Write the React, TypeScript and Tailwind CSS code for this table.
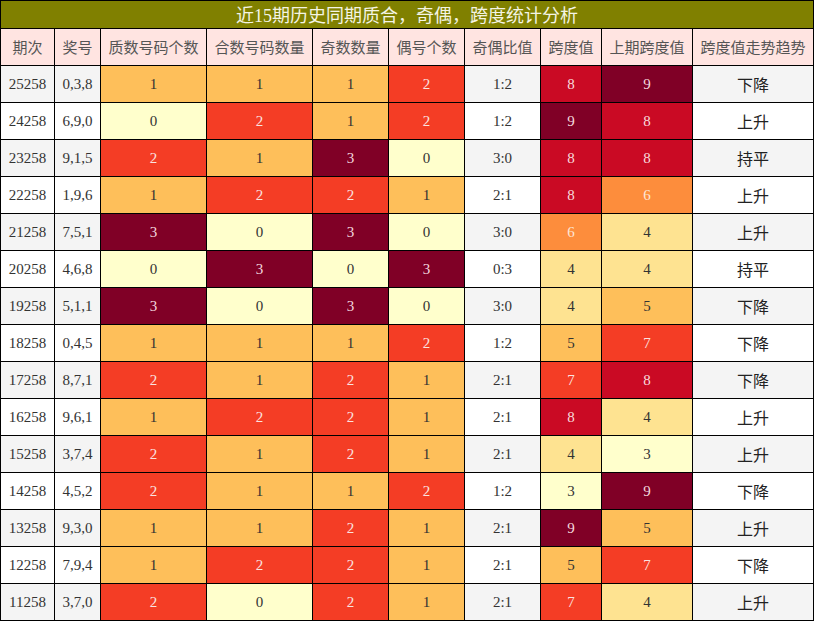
import React from "react";

interface Row {
  issue: string;
  nums: string;
  prime: number;
  composite: number;
  odd: number;
  even: number;
  ratio: string;
  span: number;
  prevSpan: number;
  trend: string;
}

const rows: Row[] = [
  { issue: "25258", nums: "0,3,8", prime: 1, composite: 1, odd: 1, even: 2, ratio: "1:2", span: 8, prevSpan: 9, trend: "下降" },
  { issue: "24258", nums: "6,9,0", prime: 0, composite: 2, odd: 1, even: 2, ratio: "1:2", span: 9, prevSpan: 8, trend: "上升" },
  { issue: "23258", nums: "9,1,5", prime: 2, composite: 1, odd: 3, even: 0, ratio: "3:0", span: 8, prevSpan: 8, trend: "持平" },
  { issue: "22258", nums: "1,9,6", prime: 1, composite: 2, odd: 2, even: 1, ratio: "2:1", span: 8, prevSpan: 6, trend: "上升" },
  { issue: "21258", nums: "7,5,1", prime: 3, composite: 0, odd: 3, even: 0, ratio: "3:0", span: 6, prevSpan: 4, trend: "上升" },
  { issue: "20258", nums: "4,6,8", prime: 0, composite: 3, odd: 0, even: 3, ratio: "0:3", span: 4, prevSpan: 4, trend: "持平" },
  { issue: "19258", nums: "5,1,1", prime: 3, composite: 0, odd: 3, even: 0, ratio: "3:0", span: 4, prevSpan: 5, trend: "下降" },
  { issue: "18258", nums: "0,4,5", prime: 1, composite: 1, odd: 1, even: 2, ratio: "1:2", span: 5, prevSpan: 7, trend: "下降" },
  { issue: "17258", nums: "8,7,1", prime: 2, composite: 1, odd: 2, even: 1, ratio: "2:1", span: 7, prevSpan: 8, trend: "下降" },
  { issue: "16258", nums: "9,6,1", prime: 1, composite: 2, odd: 2, even: 1, ratio: "2:1", span: 8, prevSpan: 4, trend: "上升" },
  { issue: "15258", nums: "3,7,4", prime: 2, composite: 1, odd: 2, even: 1, ratio: "2:1", span: 4, prevSpan: 3, trend: "上升" },
  { issue: "14258", nums: "4,5,2", prime: 2, composite: 1, odd: 1, even: 2, ratio: "1:2", span: 3, prevSpan: 9, trend: "下降" },
  { issue: "13258", nums: "9,3,0", prime: 1, composite: 1, odd: 2, even: 1, ratio: "2:1", span: 9, prevSpan: 5, trend: "上升" },
  { issue: "12258", nums: "7,9,4", prime: 1, composite: 2, odd: 2, even: 1, ratio: "2:1", span: 5, prevSpan: 7, trend: "下降" },
  { issue: "11258", nums: "3,7,0", prime: 2, composite: 0, odd: 2, even: 1, ratio: "2:1", span: 7, prevSpan: 4, trend: "上升" },
];

// count cells 0..3
const countClass = [
  "bg-[#ffffcc] text-[#333]",
  "bg-[#febf5a] text-[#333]",
  "bg-[#f43d25] text-[#fbe3e0]",
  "bg-[#800026] text-[#f3d9de]",
];

// span cells 3..9
const spanClass: Record<number, string> = {
  3: "bg-[#ffffcc] text-[#333]",
  4: "bg-[#fee391] text-[#333]",
  5: "bg-[#febf5a] text-[#333]",
  6: "bg-[#fd8d3c] text-[#fde6d6]",
  7: "bg-[#f43d25] text-[#fbe3e0]",
  8: "bg-[#ca0a24] text-[#f8dadd]",
  9: "bg-[#800026] text-[#f3d9de]",
};

const headers = ["期次", "奖号", "质数号码个数", "合数号码数量", "奇数数量", "偶号个数", "奇偶比值", "跨度值", "上期跨度值", "跨度值走势趋势"];
const colWidths = ["w-[54px]", "w-[46px]", "w-[106px]", "w-[106px]", "w-[76px]", "w-[76px]", "w-[76px]", "w-[61px]", "w-[91px]", "w-[121px]"];

const serif = "font-['Liberation_Serif','Noto_Sans_CJK_SC',serif] text-[15px]";
const sans = "font-['Noto_Sans_CJK_SC','Noto_Sans',sans-serif]";

function App() {
  return (
    <div className="w-[814px] h-[621px] bg-white">
      <table className="w-[814px] table-fixed border-collapse border border-black">
        <colgroup>
          {colWidths.map((w, i) => (
            <col key={i} className={w} />
          ))}
        </colgroup>
        <thead>
          <tr className="h-[28px]">
            <th
              colSpan={10}
              className={`bg-[#808000] text-[#f4f4e4] text-[18px] font-normal leading-none border border-black p-0 ${sans}`}
            >
              <span className="font-['Liberation_Serif','Noto_Sans_CJK_SC',serif]">近15期历史同期质合，奇偶，跨度统计分析</span>
            </th>
          </tr>
          <tr className="h-[37px]">
            {headers.map((h) => (
              <th
                key={h}
                className={`bg-[#ffe4e1] text-[#555] text-[15px] font-normal whitespace-nowrap border border-black p-0 ${sans}`}
              >
                {h}
              </th>
            ))}
          </tr>
        </thead>
        <tbody>
          {rows.map((r, i) => {
            const rowBg = i % 2 === 0 ? "bg-[#f4f4f4]" : "bg-white";
            const td = "border border-black text-center p-0 leading-none";
            return (
              <tr key={r.issue} className="h-[37px]">
                <td className={`${td} ${rowBg} text-[#333] ${serif}`}>{r.issue}</td>
                <td className={`${td} ${rowBg} text-[#333] ${serif}`}>{r.nums}</td>
                <td className={`${td} ${countClass[r.prime]} ${serif}`}>{r.prime}</td>
                <td className={`${td} ${countClass[r.composite]} ${serif}`}>{r.composite}</td>
                <td className={`${td} ${countClass[r.odd]} ${serif}`}>{r.odd}</td>
                <td className={`${td} ${countClass[r.even]} ${serif}`}>{r.even}</td>
                <td className={`${td} ${rowBg} text-[#333] ${serif}`}>{r.ratio}</td>
                <td className={`${td} ${spanClass[r.span]} ${serif}`}>{r.span}</td>
                <td className={`${td} ${spanClass[r.prevSpan]} ${serif}`}>{r.prevSpan}</td>
                <td className={`${td} ${rowBg} text-[#222] text-[16px] ${sans}`}>{r.trend}</td>
              </tr>
            );
          })}
        </tbody>
      </table>
    </div>
  );
}

export default App;
